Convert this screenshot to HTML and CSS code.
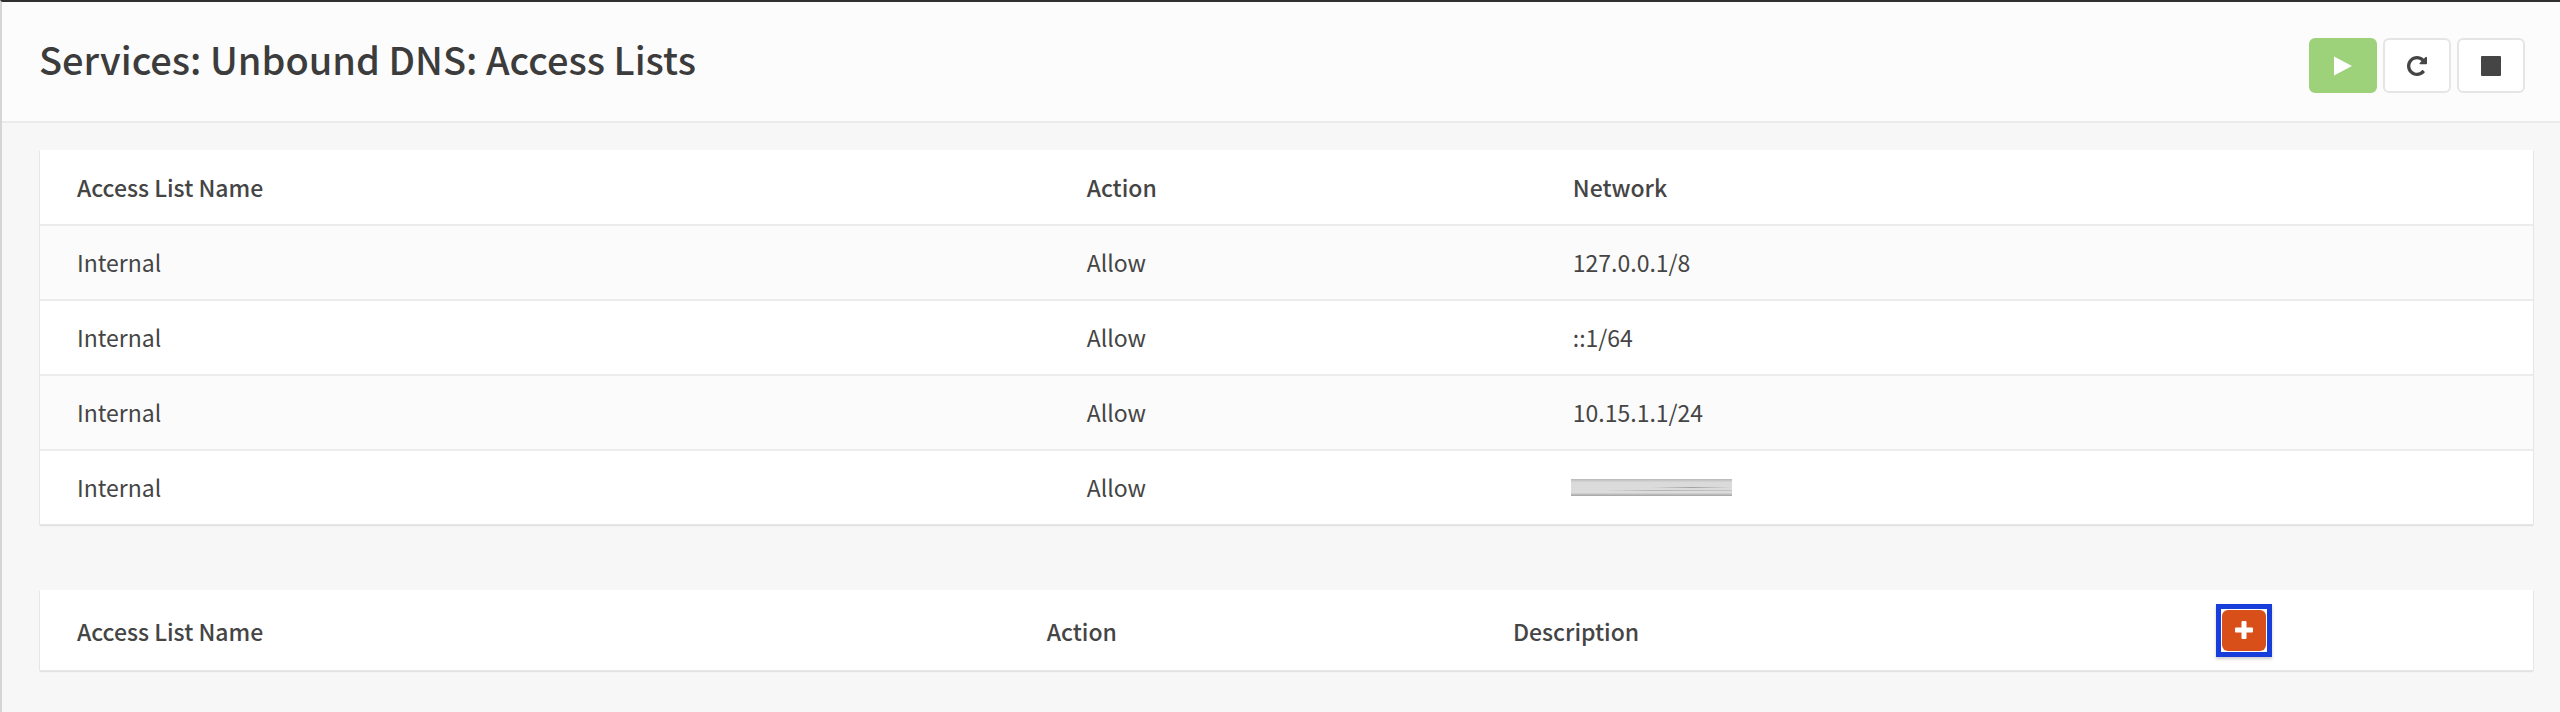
FILE: index.html
```html
<!DOCTYPE html>
<html lang="en">
<head>
    <meta charset="UTF-8">
    <title>Services: Unbound DNS: Access Lists</title>
    <link rel="stylesheet" href="styles.css">
</head>
<body>
    <header class="page-head">
        <h1>Services: Unbound DNS: Access Lists</h1>
        <div class="service-controls">
            <button type="button" class="btn btn-success" aria-label="Start service">
                <svg width="20" height="20" viewBox="0 0 20 20"><path d="M1 0.5 L19 10 L1 19.5 Z"/></svg>
            </button>
            <button type="button" class="btn" aria-label="Restart service">
                <svg width="20" height="20" viewBox="0 0 1536 1536"><path d="M1536 128v448q0 26-19 45t-45 19h-448q-42 0-59-40-17-39 14-69l138-138q-148-137-349-137-104 0-198.500 40.500t-163.500 109.500-109.500 163.500-40.500 198.500 40.500 198.500 109.500 163.500 163.500 109.500 198.500 40.500q119 0 225-52t179-147q7-10 23-12 15 0 25 9l137 138q9 8 9.500 20.500t-7.500 22.500q-109 132-264 204.500t-327 72.500q-156 0-298-61t-245-164-164-245-61-298 61-298 164-245 245-164 298-61q147 0 284.500 55.500t244.500 156.500l130-129q29-31 70-14 39 17 39 59z"/></svg>
            </button>
            <button type="button" class="btn" aria-label="Stop service">
                <svg width="20" height="20" viewBox="0 0 20 20"><rect width="20" height="20" rx="1"/></svg>
            </button>
        </div>
    </header>

    <main>
        <table class="internal">
            <colgroup>
                <col class="col-name">
                <col class="col-action">
                <col>
            </colgroup>
            <thead>
                <tr>
                    <th>Access List Name</th>
                    <th>Action</th>
                    <th>Network</th>
                </tr>
            </thead>
            <tbody>
                <tr>
                    <td>Internal</td>
                    <td>Allow</td>
                    <td>127.0.0.1/8</td>
                </tr>
                <tr>
                    <td>Internal</td>
                    <td>Allow</td>
                    <td>::1/64</td>
                </tr>
                <tr>
                    <td>Internal</td>
                    <td>Allow</td>
                    <td>10.15.1.1/24</td>
                </tr>
                <tr>
                    <td>Internal</td>
                    <td>Allow</td>
                    <td class="hidden-network"><span class="smudge"></span></td>
                </tr>
            </tbody>
        </table>

        <table class="custom">
            <colgroup>
                <col class="col-name">
                <col class="col-action">
                <col class="col-descr">
                <col>
            </colgroup>
            <thead>
                <tr>
                    <th>Access List Name</th>
                    <th>Action</th>
                    <th>Description</th>
                    <th class="add-cell">
                        <div class="highlight">
                            <button type="button" class="btn-add" aria-label="Add">
                                <svg width="18" height="18" viewBox="0 0 18 18"><path d="M7.500 0h3q1 0 1 1v5.500H17q1 0 1 1v3q0 1-1 1h-5.500V17q0 1-1 1h-3q-1 0-1-1v-5.500H1q-1 0-1-1v-3q0-1 1-1h5.500V1q0-1 1-1z"/></svg>
                            </button>
                        </div>
                    </th>
                </tr>
            </thead>
        </table>
    </main>
</body>
</html>
```
FILE: styles.css
```css
* {
    box-sizing: border-box;
}
body {
    margin: 0;
    min-height: 100vh;
    font-family: "Noto Sans CJK SC", "Open Sans", sans-serif;
    font-size: 23px;
    line-height: 36px;
    color: #454545;
    background-color: #f7f7f7;
    border-top: 2px solid #322f30;
    border-left: 2px solid #d5d5d5;
}
.page-head {
    display: flex;
    justify-content: space-between;
    align-items: flex-start;
    padding: 36px 35px 28px 37px;
    background-color: #fcfcfc;
    border-bottom: 2px solid #ebebeb;
}
h1 {
    margin: 0;
    font-size: 38px;
    font-weight: 500;
    line-height: 42px;
    color: #3c3c3c;
}
.service-controls {
    display: flex;
    gap: 6px;
}
.btn {
    display: flex;
    align-items: center;
    justify-content: center;
    width: 68px;
    height: 55px;
    padding: 0;
    background-color: #fff;
    border: 2px solid #e5e5e5;
    border-radius: 6px;
    color: #454545;
    cursor: pointer;
}
.btn-success {
    background-color: #9dd27b;
    border-color: #9dd27b;
    color: #fff;
}
svg {
    display: block;
    fill: currentColor;
}
main {
    padding: 27px 27px 40px 38px;
}
table {
    width: 100%;
    table-layout: fixed;
    border-collapse: separate;
    border-spacing: 0;
    background-color: #fff;
    box-shadow: 1px 1px 0 #e6e6e6, -1px 1px 0 #e6e6e6, 0 2px 1px #e2e2e2;
}
th,
td {
    height: 75px;
    padding: 0 37px;
    text-align: left;
    vertical-align: middle;
}
th {
    font-weight: 500;
}
td {
    border-top: 2px solid #ececec;
    padding-bottom: 2px;
}
.internal th {
    height: 74px;
}
tbody tr:nth-child(odd) {
    background-color: #fbfbfb;
}
.internal .col-name {
    width: 40.5%;
}
.internal .col-action {
    width: 19.5%;
}
.custom {
    margin-top: 66px;
}
.custom th {
    height: 80px;
    padding-top: 2px;
}
.custom .col-name {
    width: 38.9%;
}
.custom .col-action {
    width: 18.7%;
}
.custom .col-descr {
    width: 28.2%;
}
.custom .add-cell {
    padding-top: 0;
}
.internal .hidden-network {
    padding: 0 35px;
}
.smudge {
    display: block;
    width: 161px;
    height: 17px;
    background:
        linear-gradient(to right, transparent 20%, #b4b4b4 50%, #c4c4c4) 0 11px / 100% 1px no-repeat,
        linear-gradient(to right, transparent 50%, #a2a2a2 75%, transparent) 0 8px / 100% 1px no-repeat,
        linear-gradient(#b8b8b8, #dadada 20%, #dcdcdc 80%, #a2a2a2);
}
.highlight {
    width: 56px;
    padding: 1px;
    border: 5px solid #173ddb;
    box-shadow: 0 2px 3px #ccc;
}
.btn-add {
    display: flex;
    align-items: center;
    justify-content: center;
    width: 100%;
    height: 41px;
    padding: 0;
    background-color: #d94f1a;
    border: none;
    border-radius: 6px;
    color: #fff;
    cursor: pointer;
}
```
